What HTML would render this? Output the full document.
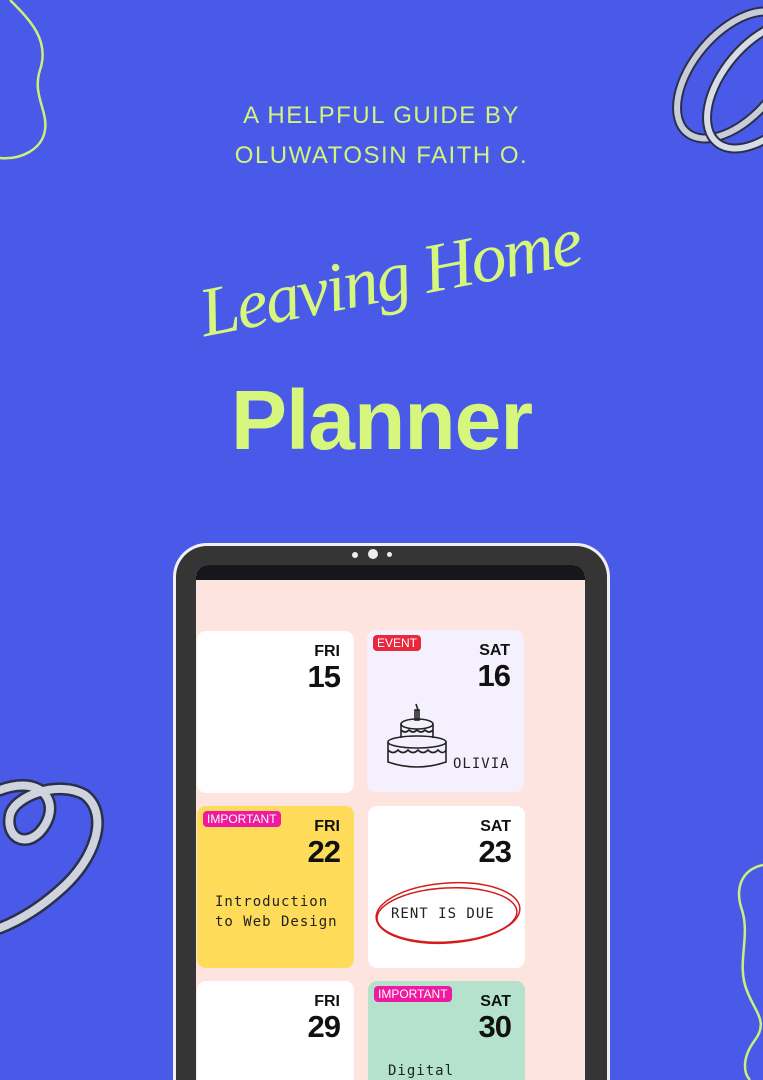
<!DOCTYPE html>
<html><head><meta charset="utf-8"><style>
*{margin:0;padding:0;box-sizing:border-box}
html,body{width:763px;height:1080px;overflow:hidden}
body{background:#4a5ae8;font-family:"Liberation Sans",sans-serif;position:relative}
.ab{position:absolute}
.sub{left:0;width:763px;text-align:center;color:#d3f47c;font-size:24px;letter-spacing:1.5px;line-height:36px}
.planner{left:0;width:763px;text-align:center;top:372px;font-size:84px;font-weight:bold;color:#d6f77c;letter-spacing:-1px}
.script{left:190px;top:238px;width:400px;white-space:nowrap;text-align:center;transform:rotate(-11deg);color:#d6f77c;font-family:"Liberation Serif",serif;font-style:italic;font-size:70px;letter-spacing:-2px;transform-origin:center}
.tab{left:173px;top:543px;width:437px;height:537px;background:#353535;border-radius:34px 34px 0 0;border:3px solid #f0f0f0;border-bottom:none}
.screen{left:196px;top:565px;width:389px;height:515px;background:#fde4df;border-radius:12px 12px 0 0;overflow:hidden}
.bar{left:0;top:0;width:389px;height:15px;background:#15171c}
.card{position:absolute;border-radius:9px;background:#fff;width:157px;height:162px}
.day{position:absolute;right:14px;top:12px;text-align:right;font-weight:bold;color:#111;font-size:16px;line-height:17px}
.day b{display:block;font-size:31px;line-height:34px;letter-spacing:-1px}
.tag{position:absolute;left:6px;top:5px;color:#fff;font-size:12px;padding:1px 4px;border-radius:4px}
.hand{position:absolute;font-family:"DejaVu Sans Mono",monospace;font-size:14px;color:#222;letter-spacing:1px}
</style></head><body>
<svg class="ab" style="left:0;top:0" width="763" height="1080">
<path d="M10 0 C30 20 50 40 40 70 C32 95 48 110 45 130 C42 150 20 160 0 158" fill="none" stroke="#c9f07a" stroke-width="2.5"/>
<path d="M763 865 C740 870 735 890 742 910 C750 935 738 960 745 985 C752 1010 770 1020 755 1040 C740 1060 745 1075 750 1080" fill="none" stroke="#c9f07a" stroke-width="2.5"/>
<g fill="none" stroke-linecap="round">
<ellipse cx="735" cy="75" rx="75" ry="42" transform="rotate(-50 735 75)" stroke="#2a2f4a" stroke-width="10"/>
<ellipse cx="735" cy="75" rx="75" ry="42" transform="rotate(-50 735 75)" stroke="#c8ccd8" stroke-width="6"/>
<ellipse cx="765" cy="85" rx="75" ry="42" transform="rotate(-50 765 85)" stroke="#2a2f4a" stroke-width="10"/>
<ellipse cx="765" cy="85" rx="75" ry="42" transform="rotate(-50 765 85)" stroke="#d8dce6" stroke-width="6"/>
<path d="M0 790 C40 775 60 800 45 825 C30 850 5 840 10 815 C15 795 60 780 85 795 C110 815 95 860 60 890 C40 908 20 920 0 928" stroke="#2a2f4a" stroke-width="13"/>
<path d="M0 790 C40 775 60 800 45 825 C30 850 5 840 10 815 C15 795 60 780 85 795 C110 815 95 860 60 890 C40 908 20 920 0 928" stroke="#cfd3de" stroke-width="8"/>
</g>
</svg>
<div class="ab sub" style="top:98px">A HELPFUL GUIDE BY</div>
<div class="ab sub" style="top:138px">OLUWATOSIN FAITH O.</div>
<div class="ab script">Leaving Home</div>
<div class="ab planner">Planner</div>
<div class="ab tab"></div>
<div class="ab" style="left:352px;top:552px;width:6px;height:6px;border-radius:50%;background:#eee"></div>
<div class="ab" style="left:368px;top:549px;width:10px;height:10px;border-radius:50%;background:#eee"></div>
<div class="ab" style="left:387px;top:552px;width:5px;height:5px;border-radius:50%;background:#eee"></div>
<div class="ab screen">
<div class="ab bar"></div>
<div class="card" style="left:1px;top:66px"><div class="day">FRI<b>15</b></div></div>
<div class="card" style="left:171px;top:65px;background:#f5f0fd"><span class="tag" style="background:#e8283c">EVENT</span><div class="day">SAT<b>16</b></div>
<svg class="ab" style="left:18px;top:72px" width="64" height="72" fill="none" stroke="#222" stroke-width="1.6"><path d="M31 2 l2 6 M32 8v10"/><rect x="30" y="8" width="4" height="10"/><ellipse cx="32" cy="22" rx="16" ry="5"/><path d="M16 22v14 M48 22v14 M16 28 q4 4 8 0 q4 4 8 0 q4 4 8 0 q4 4 8 0"/><ellipse cx="32" cy="40" rx="29" ry="6"/><path d="M3 40v20 q29 10 58 0v-20 M3 48 q5 5 10 0 q5 5 10 0 q5 5 10 0 q5 5 10 0 q5 5 10 0 q5 5 8 0"/></svg>
<div class="hand" style="left:86px;top:126px">OLIVIA</div></div>
<div class="card" style="left:1px;top:241px;background:#fedb58"><span class="tag" style="background:#ee1aa0">IMPORTANT</span><div class="day">FRI<b>22</b></div>
<div class="hand" style="left:18px;top:86px;line-height:20px;font-size:14px">Introduction<br>to Web Design</div></div>
<div class="card" style="left:172px;top:241px"><div class="day">SAT<b>23</b></div>
<svg class="ab" style="left:3px;top:70px" width="155" height="75" fill="none" stroke="#d41c1c" stroke-width="1.5"><ellipse cx="77" cy="37" rx="72" ry="30" transform="rotate(-4 77 37)"/><ellipse cx="76" cy="39" rx="70" ry="27" transform="rotate(-3 76 39)"/></svg>
<div class="hand" style="left:23px;top:100px">RENT IS DUE</div></div>
<div class="card" style="left:1px;top:416px;height:120px"><div class="day">FRI<b>29</b></div></div>
<div class="card" style="left:172px;top:416px;height:120px;background:#b5e2cd"><span class="tag" style="background:#ee1aa0">IMPORTANT</span><div class="day">SAT<b>30</b></div>
<div class="hand" style="left:20px;top:82px">Digital</div></div>
</div>
</body></html>
